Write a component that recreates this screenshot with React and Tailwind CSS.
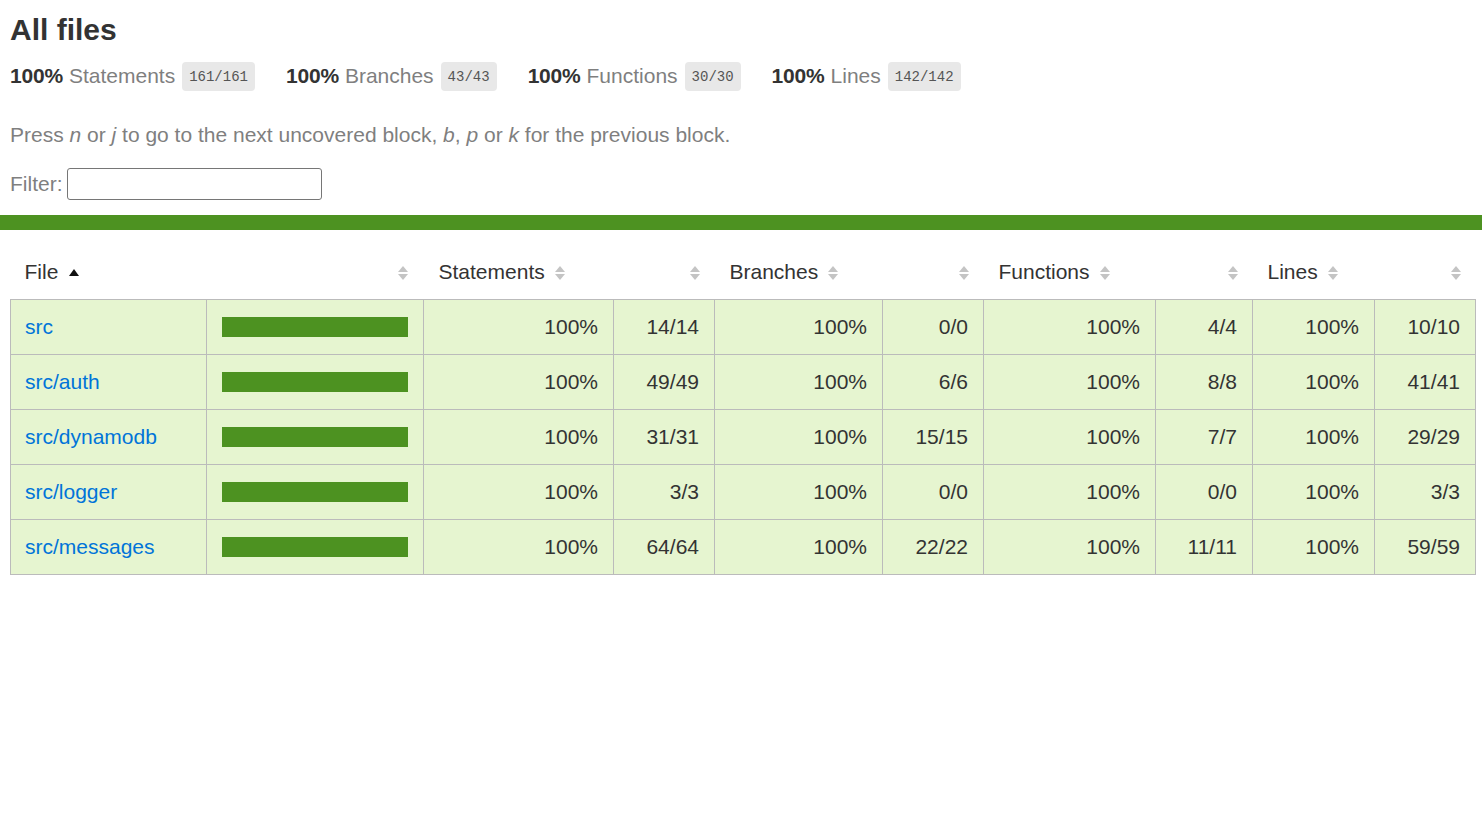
import React from 'react'

const rows = [
  { file: 'src', s: '14/14', b: '0/0', f: '4/4', l: '10/10' },
  { file: 'src/auth', s: '49/49', b: '6/6', f: '8/8', l: '41/41' },
  { file: 'src/dynamodb', s: '31/31', b: '15/15', f: '7/7', l: '29/29' },
  { file: 'src/logger', s: '3/3', b: '0/0', f: '0/0', l: '3/3' },
  { file: 'src/messages', s: '64/64', b: '22/22', f: '11/11', l: '59/59' },
]

const summary = [
  { label: 'Statements', frac: '161/161' },
  { label: 'Branches', frac: '43/43' },
  { label: 'Functions', frac: '30/30' },
  { label: 'Lines', frac: '142/142' },
]

function Sorter() {
  return (
    <svg width='10' height='14' viewBox='0 0 10 14' className='inline-block align-[-1px]'>
      <polygon points='5,0 10,6 0,6' fill='#c4c4c4' />
      <polygon points='0,8 10,8 5,14' fill='#c4c4c4' />
    </svg>
  )
}

function SortUp() {
  return (
    <svg width='10' height='7' viewBox='0 0 10 7' className='inline-block align-[3px]'>
      <polygon points='5,0 10,7 0,7' fill='#111' />
    </svg>
  )
}

export default function App() {
  const td = 'border border-[#bbbbbb] h-[55px] py-0 px-[15px] text-right'
  return (
    <div className='bg-white min-h-[819px] text-[#333] text-[21px]' style={{ fontFamily: '"Liberation Sans", Arial, sans-serif' }}>
      <div className='px-[10px] pt-[10px]'>
        <h1 className='text-[30px] font-bold leading-[40px] h-[40px]'>All files</h1>

        {/* summary line */}
        <div className='flex items-center h-[30px] mt-[11px]'>
          {summary.map((s) => (
            <div key={s.label} className='flex items-center pr-[31px]'>
              <span className='font-bold tracking-[-0.2px]'>100%</span>
              <span className='ml-[6px] text-[#7f7f7f]'>{s.label}</span>
              <span
                className='ml-[7px] h-[29px] px-[7px] pt-[3px] flex items-center rounded-[4px] bg-[#e8e8e8] text-[#555] text-[14px]'
                style={{ fontFamily: '"Liberation Mono", monospace' }}
              >
                {s.frac}
              </span>
            </div>
          ))}
        </div>

        <p className='text-[#7f7f7f] leading-[30px] mt-[29px]'>
          Press <em>n</em> or <em>j</em> to go to the next uncovered block, <em>b</em>, <em>p</em> or <em>k</em> for the previous block.
        </p>

        <div className='flex items-center mt-[18px] h-[32px]'>
          <span className='text-[#7f7f7f]'>Filter:</span>
          <input type='search' className='ml-[4px] w-[255px] h-[32px] border border-[#767676] rounded-[3px] outline-none px-1' />
        </div>
      </div>

      <div className='h-[15px] bg-[#4d9221] mt-[15px]'></div>

      <div className='px-[10px] pt-[15px]'>
        <table className='table-fixed border-collapse w-[1465px]'>
          <colgroup>
            <col className='w-[196px]' />
            <col className='w-[217px]' />
            <col className='w-[190px]' />
            <col className='w-[101px]' />
            <col className='w-[168px]' />
            <col className='w-[101px]' />
            <col className='w-[172px]' />
            <col className='w-[97px]' />
            <col className='w-[122px]' />
            <col className='w-[101px]' />
          </colgroup>
          <thead>
            <tr className='h-[54px]'>
              <th className='font-normal text-left pl-[14px] pr-[15px]'>
                File<span className='ml-[11px]'><SortUp /></span>
              </th>
              <th className='font-normal text-right pl-[15px] pr-[16px]'><Sorter /></th>
              <th className='font-normal text-left px-[15px]'>
                Statements<span className='ml-[10px]'><Sorter /></span>
              </th>
              <th className='font-normal text-right px-[15px]'><Sorter /></th>
              <th className='font-normal text-left px-[15px]'>
                Branches<span className='ml-[10px]'><Sorter /></span>
              </th>
              <th className='font-normal text-right px-[15px]'><Sorter /></th>
              <th className='font-normal text-left px-[15px]'>
                Functions<span className='ml-[10px]'><Sorter /></span>
              </th>
              <th className='font-normal text-right px-[15px]'><Sorter /></th>
              <th className='font-normal text-left px-[15px]'>
                Lines<span className='ml-[10px]'><Sorter /></span>
              </th>
              <th className='font-normal text-right px-[15px]'><Sorter /></th>
            </tr>
          </thead>
          <tbody className='bg-[#e6f5d0]'>
            {rows.map((r) => (
              <tr key={r.file}>
                <td className='border border-[#bbbbbb] h-[55px] py-0 pl-[14px] pr-[15px] text-left'>
                  <a href='#' className='text-[#0074d9]'>{r.file}</a>
                </td>
                <td className='border border-[#bbbbbb] h-[55px] py-0 pl-[15px]'>
                  <div className='w-[186px] h-[20px] bg-[#4d9221]'></div>
                </td>
                <td className={td}>100%</td>
                <td className={td}>{r.s}</td>
                <td className={td}>100%</td>
                <td className={td}>{r.b}</td>
                <td className={td}>100%</td>
                <td className={td}>{r.f}</td>
                <td className={td}>100%</td>
                <td className={td}>{r.l}</td>
              </tr>
            ))}
          </tbody>
        </table>
      </div>
    </div>
  )
}
